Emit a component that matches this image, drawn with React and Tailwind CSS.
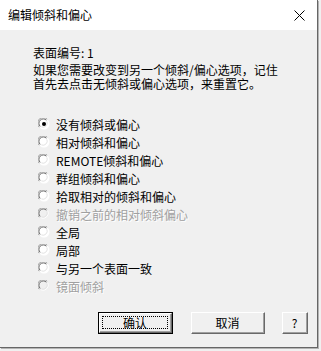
import React from "react";

const font = { fontFamily: '"Noto Sans CJK SC", "Liberation Sans", sans-serif' };

function Radio({ checked, disabled }) {
  return (
    <svg width="12" height="12" viewBox="0 0 12 12" className="shrink-0">
      <circle cx="6" cy="6" r="5.5" fill={disabled ? "#f0f0f0" : "#ffffff"} />
      <path d="M1.2 9.2 A5.3 5.3 0 0 1 9.2 1.2" fill="none" stroke="#a0a0a0" strokeWidth="1" />
      <path d="M2.2 8.4 A4.2 4.2 0 0 1 8.4 2.2" fill="none" stroke="#696969" strokeWidth="1" />
      <path d="M9.8 2.8 A5.3 5.3 0 0 1 2.8 9.8" fill="none" stroke="#ffffff" strokeWidth="1" />
      <path d="M8.9 3.4 A4.2 4.2 0 0 1 3.4 8.9" fill="none" stroke="#e3e3e3" strokeWidth="1" />
      {checked && <circle cx="6" cy="6" r="2" fill="#000" />}
    </svg>
  );
}

const options = [
  { t: "没有倾斜或偏心", c: true },
  { t: "相对倾斜和偏心" },
  { t: "REMOTE倾斜和偏心" },
  { t: "群组倾斜和偏心" },
  { t: "拾取相对的倾斜和偏心" },
  { t: "撤销之前的相对倾斜偏心", d: true },
  { t: "全局" },
  { t: "局部" },
  { t: "与另一个表面一致" },
  { t: "镜面倾斜", d: true },
];

function Btn({ children, w, def }) {
  return (
    <div
      className={`h-[22px] ${w} ${def ? "border border-black" : ""} bg-[#f0f0f0] flex`}
    >
      <div className="flex-1 flex border-t border-l border-white border-r border-b border-r-[#696969] border-b-[#696969]">
        <div className="flex-1 flex border-r border-b border-r-[#a0a0a0] border-b-[#a0a0a0] p-[2px]">
          <div
            className={`flex-1 flex items-center justify-center text-[12px] leading-none text-black ${
              def ? "border border-dotted border-black" : ""
            }`}
          >
            {children}
          </div>
        </div>
      </div>
    </div>
  );
}

export default function App() {
  return (
    <div className="w-[321px] h-[351px] bg-[#f0f0f0] overflow-hidden" style={font}>
      <div className="w-[318px] h-[348px] border-r border-b border-[#666666] shadow-[1px_1px_0_#b4b4b4] flex flex-col bg-[#f0f0f0]">
        <div className="h-[30px] bg-white flex items-center justify-between pl-[8px] pr-[12px]">
          <span className="text-[12px] text-black leading-none">编辑倾斜和偏心</span>
          <svg width="11" height="11" viewBox="0 0 11 11">
            <path d="M0.5 0.5 L10.5 10.5 M10.5 0.5 L0.5 10.5" stroke="#000" strokeWidth="1" />
          </svg>
        </div>
        <div className="flex flex-col pl-[33px] pt-[16px] text-[12px] leading-[13px] text-black">
          <div>表面编号: 1</div>
          <div className="mt-[4px] leading-[14px]">
            如果您需要改变到另一个倾斜/偏心选项，记住
            <br />
            首先去点击无倾斜或偏心选项，来重置它。
          </div>
          <div className="mt-[24px] flex flex-col pl-[5px]">
            {options.map((o, i) => (
              <div key={i} className="h-[18px] flex items-center gap-[6px]">
                <Radio checked={o.c} disabled={o.d} />
                <span
                  className={o.d ? "text-[#a0a0a0] [text-shadow:1px_1px_0_#ffffff]" : "text-black"}
                >
                  {o.t}
                </span>
              </div>
            ))}
          </div>
        </div>
        <div className="mt-[17px] flex pl-[98px]">
          <Btn w="w-[75px]" def>确认</Btn>
          <div className="w-[18px]" />
          <Btn w="w-[74px]">取消</Btn>
          <div className="w-[17px]" />
          <Btn w="w-[26px]">?</Btn>
        </div>
      </div>
    </div>
  );
}
